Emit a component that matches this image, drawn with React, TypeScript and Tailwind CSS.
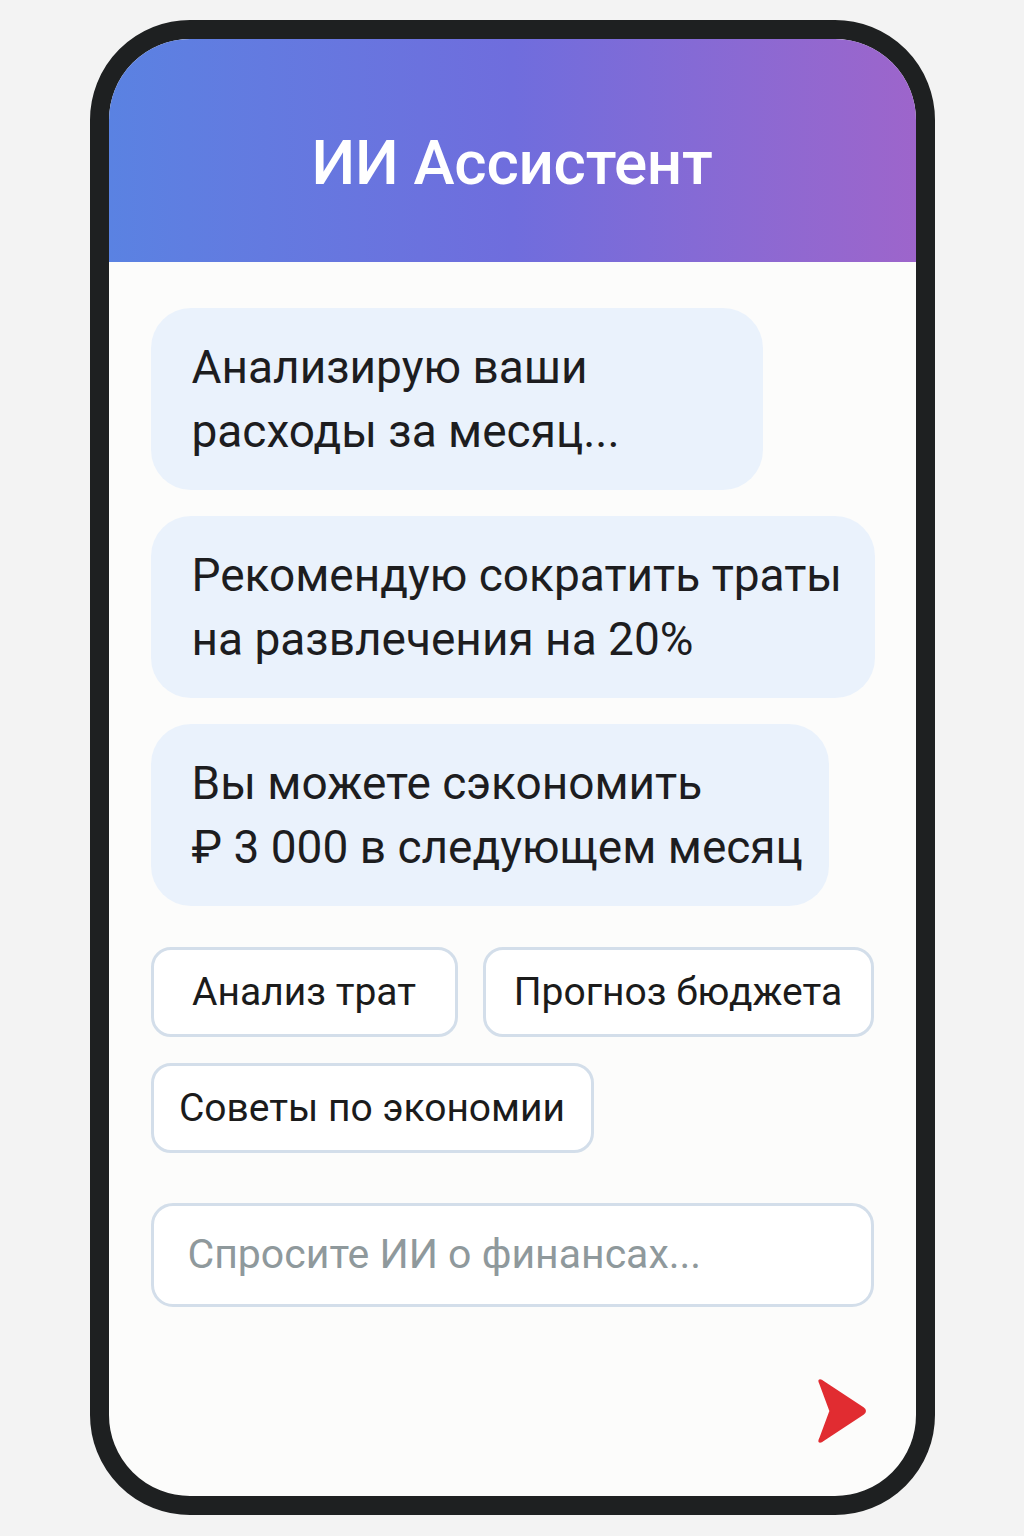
const messages = [
  { text: ["Анализирую ваши", "расходы за месяц..."], width: "w-[612px]" },
  { text: ["Рекомендую сократить траты", "на развлечения на 20%"], width: "w-[724px]" },
  { text: ["Вы можете сэкономить", "₽ 3 000 в следующем месяц"], width: "w-[678px]" },
];

const chips = [
  { label: "Анализ трат", width: "w-[307px]" },
  { label: "Прогноз бюджета", width: "w-[391px]" },
  { label: "Советы по экономии", width: "w-[443px]" },
];

function SendIcon() {
  return (
    <svg width="52" height="64" viewBox="0 0 52 64" aria-hidden>
      <path
        d="M4 4 Q2 0 6 2 L47 29 Q51 32 47 35 L6 62 Q2 64 4 60 L14 33 Q15 32 14 31 Z"
        fill="#e12c31"
        stroke="#e12c31"
        strokeWidth="2"
        strokeLinejoin="round"
      />
    </svg>
  );
}

export default function App() {
  return (
    <div className="min-h-[1536px] bg-[#f3f3f3] pt-[20px] font-['Roboto',sans-serif]">
      <div className="mx-auto flex h-[1495px] w-[845px] flex-col overflow-hidden rounded-[100px] border-[19px] border-[#1e2021] bg-[#fcfcfb]">
        <header className="flex h-[223px] shrink-0 items-center justify-center bg-gradient-to-r from-[#5a82e2] via-[#6f6ddd] to-[#9d65cb] pt-[24px]">
          <h1 className="text-[62px] font-medium tracking-[-0.3px] text-white">ИИ Ассистент</h1>
        </header>

        <div className="flex flex-1 flex-col px-[42px] pt-[46px]">
          <div className="flex flex-col gap-[26px]">
            {messages.map((m, i) => (
              <div
                key={i}
                className={`${m.width} whitespace-nowrap rounded-[40px] bg-[#eaf2fc] py-[27px] pl-[41px] pr-[16px] text-[46px] leading-[64px] text-[#1d1d1f]`}
              >
                {m.text.map((line) => (
                  <div key={line}>{line}</div>
                ))}
              </div>
            ))}
          </div>

          <div className="mt-[41px] flex flex-wrap gap-x-[25px] gap-y-[26px]">
            {chips.map((c) => (
              <button
                key={c.label}
                className={`${c.width} h-[90px] whitespace-nowrap rounded-[20px] border-[3px] border-[#d3deea] bg-white text-center text-[39px] text-[#1b1b1b]`}
              >
                {c.label}
              </button>
            ))}
          </div>

          <div className="mt-[50px] flex h-[104px] items-center rounded-[22px] border-[3px] border-[#d3deea] bg-white px-[34px] text-[41px] text-[#8f999c]">
            Спросите ИИ о финансах...
          </div>

          <div className="mt-[72px] flex justify-end pr-[6px]">
            <SendIcon />
          </div>
        </div>
      </div>
    </div>
  );
}
